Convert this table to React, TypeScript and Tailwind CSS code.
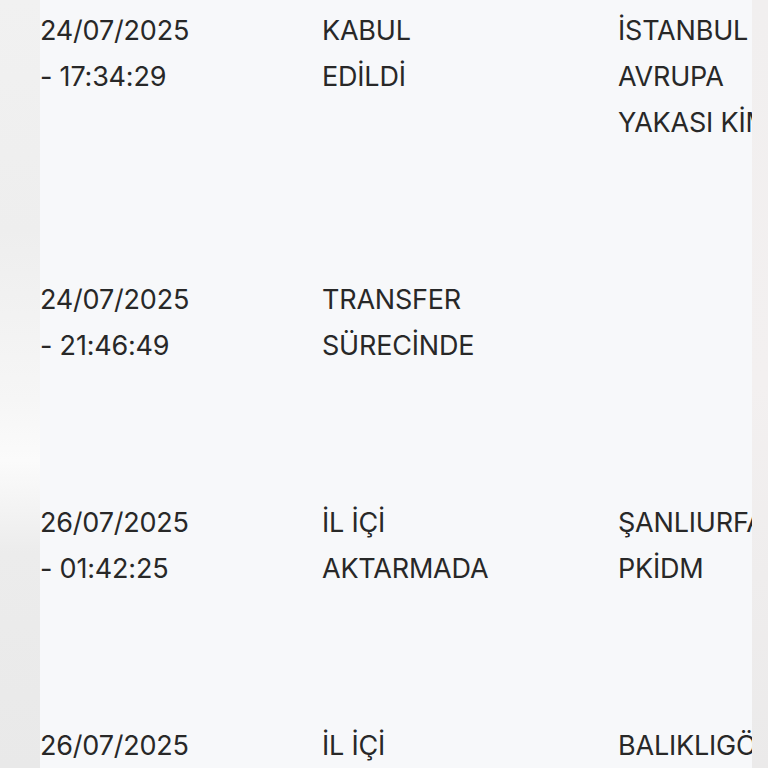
import React from 'react';

type Row = { date: string[]; status: string[]; place: string[] };

const rows: Row[] = [
    { date: ['24/07/2025', '- 17:34:29'], status: ['KABUL', 'EDİLDİ'], place: ['İSTANBUL', 'AVRUPA', 'YAKASI KİMDM'] },
    { date: ['24/07/2025', '- 21:46:49'], status: ['TRANSFER', 'SÜRECİNDE'], place: [] },
    { date: ['26/07/2025', '- 01:42:25'], status: ['İL İÇİ', 'AKTARMADA'], place: ['ŞANLIURFA', 'PKİDM'] },
    { date: ['26/07/2025', '- 09:12:40'], status: ['İL İÇİ', 'DAĞITIMDA'], place: ['BALIKLIGÖL', 'ŞUBE'] },
];

const Cell: React.FC<{ lines: string[]; width: string }> = ({ lines, width }) => (
    <div className={`${width} shrink-0 whitespace-nowrap`}>
        {lines.map((l, i) => (
            <div key={i}>{l}</div>
        ))}
    </div>
);

const App: React.FC = () => {
    return (
        <div className="flex h-[768px] w-[768px] overflow-hidden">
            {/* blurred backdrop, left edge */}
            <div className="w-[40px] shrink-0 bg-[linear-gradient(180deg,#f1f1f1_0%,#eeeeee_30%,#f6f6f6_52%,#fbfbfb_60%,#ececec_72%,#e9e9e9_100%)]" />

            {/* table panel */}
            <div
                className="flex-1 bg-[#f7f8fa] overflow-hidden text-[#282828] text-[27px] leading-[46px] tracking-[-0.2px] pt-[8px]"
                style={{ fontFamily: 'Inter, "Noto Sans", sans-serif' }}
            >
                {rows.map((r, i) => (
                    <div key={i} className="flex pb-[131px]">
                        <Cell lines={r.date} width="w-[282px]" />
                        <Cell lines={r.status} width="w-[296px]" />
                        <Cell lines={r.place} width="w-[220px]" />
                    </div>
                ))}
            </div>

            {/* blurred backdrop, right edge */}
            <div className="w-[16px] shrink-0 bg-[linear-gradient(180deg,#f1efef_0%,#f3f0f0_50%,#ebeaea_100%)]" />
        </div>
    );
};

export default App;
